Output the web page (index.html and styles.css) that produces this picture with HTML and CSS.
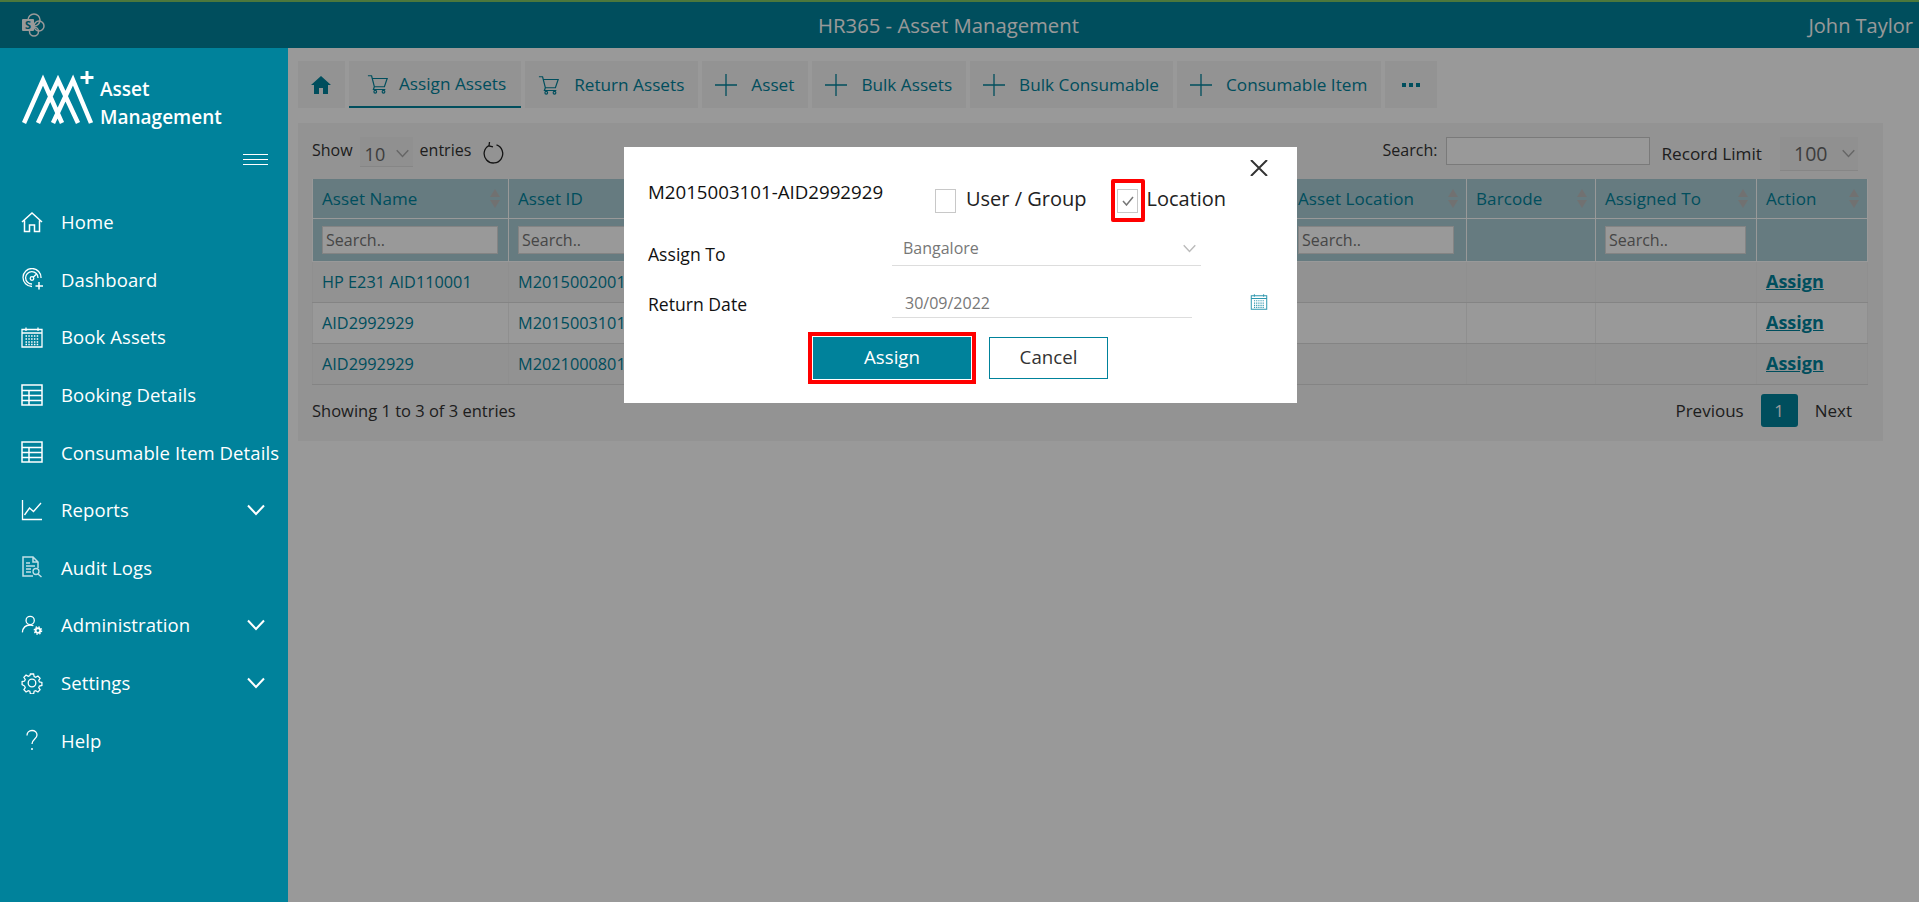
FILE: index.html
```html
<!DOCTYPE html>
<html lang="en">
<head>
    <meta charset="UTF-8">
    <title>HR365 - Asset Management</title>
    <link rel="stylesheet" href="styles.css">
</head>
<body>
    <svg class="sprite" aria-hidden="true">
        <symbol id="i-table" viewBox="0 0 22 22"><path d="M1 1h20v20H1zM1 6.500h20M1 11.500h20M1 16.500h20M8 6.500V21" fill="none" stroke="currentColor" stroke-width="1.500"/></symbol>
        <symbol id="i-calendar" viewBox="0 0 22 22"><path d="M1 3.500h20v17.500H1zM1 7h20M5 1.500v3.500M17 1.500v3.500" fill="none" stroke="currentColor" stroke-width="1.300"/><path d="M4.500 10h13M4.500 13h13M4.500 16h13M4.500 18.500h13" fill="none" stroke="currentColor" stroke-width="1.500" stroke-dasharray="1.500 1.300"/></symbol>
        <symbol id="i-chev" viewBox="0 0 18 12"><path d="M1 1.500l8 8.500 8-8.500" fill="none" stroke="currentColor" stroke-width="2"/></symbol>
        <symbol id="i-cart" viewBox="0 0 24 22"><path d="M1 2h4l3 12h11l3-9H6M8 14l-1 3h13" fill="none" stroke="currentColor" stroke-width="1.300"/><circle cx="9" cy="19.500" r="1.500" fill="none" stroke="currentColor" stroke-width="1.200"/><circle cx="18" cy="19.500" r="1.500" fill="none" stroke="currentColor" stroke-width="1.200"/></symbol>
        <symbol id="i-plus" viewBox="0 0 22 22"><path d="M11 0v22M0 11h22" fill="none" stroke="currentColor" stroke-width="1.300"/></symbol>
        <symbol id="i-sort" viewBox="0 0 10 19"><path d="M5 0l5 8H0zM5 19l5-8H0z" fill="#bdbdbd"/></symbol>
    </svg>

    <header class="topbar">
        <svg class="sp-logo" viewBox="0 0 24 24" width="24" height="24">
            <circle cx="13" cy="7" r="6" fill="none" stroke="#fff" stroke-width="1.500"/>
            <circle cx="18" cy="13" r="5" fill="none" stroke="#fff" stroke-width="1.500"/>
            <circle cx="13" cy="18.500" r="4.500" fill="none" stroke="#fff" stroke-width="1.500"/>
            <rect x="1" y="6" width="12" height="12" rx="1" fill="#fff"/>
            <text x="7" y="16" class="sp-letter">S</text>
        </svg>
        <div class="topbar-title">HR365 - Asset Management</div>
        <div class="topbar-user">John Taylor</div>
    </header>

    <div class="layout">
        <aside class="sidebar">
            <div class="logo">
                <svg class="logo-mark" viewBox="0 0 72 56" width="72" height="56">
                    <path d="M2 53L21 10L40 53M16 53L36 10L56 53M31 53L51 10L69 53" fill="none" stroke="#fff" stroke-width="4.500"/>
                    <path d="M65 1v13M58.500 7.500h13" fill="none" stroke="#fff" stroke-width="3"/>
                </svg>
                <div class="logo-text">Asset<br>Management</div>
            </div>
            <div class="burger"><span></span><span></span><span></span></div>
            <nav class="side-nav">
                <a class="side-item">
                    <svg class="side-icon" viewBox="0 0 22 22"><path d="M1 11L11 2l10 9M3.500 9.500V20.500h5v-6.500h5v6.500h5V9.500" fill="none" stroke="currentColor" stroke-width="1.500"/></svg>
                    <span>Home</span>
                </a>
                <a class="side-item">
                    <svg class="side-icon" viewBox="0 0 22 22"><path d="M11 18.500A9 9 0 1 1 20 10M11 16a6.200 6.200 0 1 1 6-6M12 9.500l3-3" fill="none" stroke="currentColor" stroke-width="1.300"/><circle cx="11" cy="10.500" r="1.800" fill="none" stroke="currentColor" stroke-width="1.300"/><path d="M18 14v7.500M14.500 18h7.500" fill="none" stroke="currentColor" stroke-width="1.500"/></svg>
                    <span>Dashboard</span>
                </a>
                <a class="side-item">
                    <svg class="side-icon"><use href="#i-calendar"/></svg>
                    <span>Book Assets</span>
                </a>
                <a class="side-item">
                    <svg class="side-icon"><use href="#i-table"/></svg>
                    <span>Booking Details</span>
                </a>
                <a class="side-item">
                    <svg class="side-icon"><use href="#i-table"/></svg>
                    <span>Consumable Item Details</span>
                </a>
                <a class="side-item">
                    <svg class="side-icon" viewBox="0 0 22 22"><path d="M1.500 1v19.500H21M3.500 16l5-7 4 3.500L20 4" fill="none" stroke="currentColor" stroke-width="1.300"/></svg>
                    <span>Reports</span>
                    <svg class="side-chev"><use href="#i-chev"/></svg>
                </a>
                <a class="side-item">
                    <svg class="side-icon audit" viewBox="0 0 22 22"><path d="M12 20H2V1h10l5 5v6M12 1v5h5M5 7h4M5 10h9M5 13h5M5 16h5" fill="none" stroke="currentColor" stroke-width="1.500"/><circle cx="15" cy="15.500" r="3" fill="none" stroke="currentColor" stroke-width="1.300"/><path d="M17 18l3.500 3" stroke="currentColor" stroke-width="1.500"/></svg>
                    <span>Audit Logs</span>
                </a>
                <a class="side-item">
                    <svg class="side-icon user" viewBox="0 0 24 22"><circle cx="10" cy="6" r="4.500" fill="none" stroke="currentColor" stroke-width="1.400"/><path d="M1.500 19c.5-5 3.500-8 8.500-8 1.500 0 2.500.3 3.500.8" fill="none" stroke="currentColor" stroke-width="1.400"/><circle cx="18.500" cy="17" r="2.500" fill="none" stroke="currentColor" stroke-width="2"/><circle cx="18.500" cy="17" r="4" fill="none" stroke="currentColor" stroke-width="1.500" stroke-dasharray="1.600 1.540"/></svg>
                    <span>Administration</span>
                    <svg class="side-chev"><use href="#i-chev"/></svg>
                </a>
                <a class="side-item">
                    <svg class="side-icon" viewBox="0 0 22 22"><circle cx="11" cy="11" r="3.800" fill="none" stroke="currentColor" stroke-width="1.300"/><path d="M9.200 1h3.600l.6 2.800 1.700.8 2.500-1.400 2.400 2.500-1.500 2.400.7 1.700 2.800.6v3.300l-2.800.7-.7 1.700 1.500 2.400-2.400 2.500-2.500-1.500-1.700.7-.6 2.800H9.200l-.6-2.800-1.700-.7-2.500 1.500-2.400-2.500 1.500-2.400-.7-1.700L0 12.700V9.400l2.800-.6.700-1.700L2 4.700l2.400-2.500 2.500 1.400 1.700-.8z" transform="translate(1.100 1.100) scale(.9)" fill="none" stroke="currentColor" stroke-width="1.400"/></svg>
                    <span>Settings</span>
                    <svg class="side-chev"><use href="#i-chev"/></svg>
                </a>
                <a class="side-item">
                    <svg class="side-icon" viewBox="0 0 22 22"><path d="M6 6.500C6 3.500 8 1.500 11 1.500s5 2 5 4.500c0 4-5 4-5 9" fill="none" stroke="currentColor" stroke-width="1.300"/><circle cx="11" cy="20" r="1" fill="currentColor"/></svg>
                    <span>Help</span>
                </a>
            </nav>
        </aside>

        <main class="main">
            <div class="tabs">
                <a class="tab tab-home"><svg viewBox="0 0 20 18" width="20" height="18"><path d="M10 0L0 9h3v9h5v-6h4v6h5V9h3z" fill="currentColor"/></svg></a>
                <a class="tab tab-active"><svg class="tab-icon"><use href="#i-cart"/></svg>Assign Assets</a>
                <a class="tab"><svg class="tab-icon"><use href="#i-cart"/></svg>Return Assets</a>
                <a class="tab"><svg class="tab-icon"><use href="#i-plus"/></svg>Asset</a>
                <a class="tab"><svg class="tab-icon"><use href="#i-plus"/></svg>Bulk Assets</a>
                <a class="tab"><svg class="tab-icon"><use href="#i-plus"/></svg>Bulk Consumable</a>
                <a class="tab"><svg class="tab-icon"><use href="#i-plus"/></svg>Consumable Item</a>
                <a class="tab tab-more"><span></span><span></span><span></span></a>
            </div>

            <section class="panel">
                <div class="table-tools">
                    <div class="tools-left">
                        <span>Show</span>
                        <div class="fake-select select-len">10<svg class="select-chev"><use href="#i-chev"/></svg></div>
                        <span>entries</span>
                        <svg class="refresh" viewBox="0 0 22 22" width="22" height="22"><path d="M7 3.500a9.300 9.300 0 1 0 7.500-.6M7.500 0L7 4l4 .8" fill="none" stroke="#222" stroke-width="1.300"/></svg>
                    </div>
                    <div class="tools-right">
                        <span>Search:</span>
                        <input class="table-search" type="text">
                        <span class="limit-label">Record Limit</span>
                        <div class="fake-select select-limit">100<svg class="select-chev"><use href="#i-chev"/></svg></div>
                    </div>
                </div>

                <table class="grid">
                    <colgroup>
                        <col class="col-name"><col class="col-id"><col class="col-loc"><col class="col-code"><col class="col-user"><col class="col-action">
                    </colgroup>
                    <thead>
                        <tr class="head-row">
                            <th>Asset Name<svg class="sort"><use href="#i-sort"/></svg></th>
                            <th>Asset ID<svg class="sort"><use href="#i-sort"/></svg></th>
                            <th>Asset Location<svg class="sort"><use href="#i-sort"/></svg></th>
                            <th>Barcode<svg class="sort"><use href="#i-sort"/></svg></th>
                            <th>Assigned To<svg class="sort"><use href="#i-sort"/></svg></th>
                            <th>Action<svg class="sort"><use href="#i-sort"/></svg></th>
                        </tr>
                        <tr class="filter-row">
                            <th><input type="text" placeholder="Search.."></th>
                            <th><input type="text" placeholder="Search.."></th>
                            <th class="filter-loc"><input type="text" placeholder="Search.."></th>
                            <th></th>
                            <th><input type="text" placeholder="Search.."></th>
                            <th></th>
                        </tr>
                    </thead>
                    <tbody>
                        <tr><td>HP E231 AID110001</td><td>M2015002001</td><td></td><td></td><td></td><td><a class="assign-link">Assign</a></td></tr>
                        <tr><td>AID2992929</td><td>M2015003101</td><td></td><td></td><td></td><td><a class="assign-link">Assign</a></td></tr>
                        <tr><td>AID2992929</td><td>M2021000801</td><td></td><td></td><td></td><td><a class="assign-link">Assign</a></td></tr>
                    </tbody>
                </table>

                <div class="table-foot">
                    <span>Showing 1 to 3 of 3 entries</span>
                    <div class="pager">
                        <span>Previous</span>
                        <span class="page-current">1</span>
                        <span>Next</span>
                    </div>
                </div>
            </section>
        </main>
    </div>

    <div class="overlay">
        <div class="modal">
            <button class="modal-close" type="button"><svg viewBox="0 0 18 16" width="18" height="16"><path d="M1 0l16 16M17 0L1 16" fill="none" stroke="#333" stroke-width="2"/></svg></button>
            <div class="modal-head">
                <div class="modal-title">M2015003101-AID2992929</div>
                <div class="modal-checks">
                    <label class="check-wrap"><span class="check"></span><span class="check-text">User / Group</span></label>
                    <label class="check-wrap check-marked">
                        <span class="mark"><span class="check"><svg viewBox="0 0 12 10" width="12" height="10"><path d="M1 5l3.500 4L11 1" fill="none" stroke="#777" stroke-width="1.500"/></svg></span></span><span class="check-text">Location</span>
                    </label>
                </div>
            </div>
            <div class="modal-form">
                <div class="form-label">Assign To</div>
                <div class="form-field field-select">Bangalore<svg class="field-chev"><use href="#i-chev"/></svg></div>
                <div class="form-label label-date">Return Date</div>
                <div class="date-row">
                    <div class="form-field field-date">30/09/2022</div>
                    <svg class="date-icon"><use href="#i-calendar"/></svg>
                </div>
            </div>
            <div class="modal-actions">
                <button class="btn btn-primary" type="button">Assign</button>
                <button class="btn btn-cancel" type="button">Cancel</button>
            </div>
        </div>
    </div>
</body>
</html>
```
FILE: styles.css
```css
* {
    box-sizing: border-box;
}
html, body {
    height: 100%;
}
body {
    margin: 0;
    font-family: "Open Sans", "Noto Sans", sans-serif;
    font-size: 16.300px;
    color: #333;
    background-color: #fff;
    overflow: hidden;
}
.sprite {
    display: none;
}
a {
    color: inherit;
}

/* top bar */
.topbar {
    height: 48px;
    display: flex;
    align-items: center;
    background-color: #00829b;
    border-top: 2px solid #7fc864;
    color: #fff;
    position: relative;
}
.sp-logo {
    margin-left: 21px;
}
.sp-letter {
    font-size: 11px;
    font-weight: 700;
    fill: #00829b;
    text-anchor: middle;
}
.topbar-title {
    position: absolute;
    left: 0;
    right: 22px;
    text-align: center;
    font-size: 20.300px;
}
.topbar-user {
    margin-left: auto;
    padding-right: 6px;
    font-size: 20px;
}

/* sidebar */
.layout {
    display: flex;
    height: 854px;
}
.sidebar {
    width: 288px;
    flex-shrink: 0;
    background-color: #00829b;
    color: #fff;
    position: relative;
    z-index: 3;
}
.logo {
    display: flex;
    padding: 22px 0 0 22px;
    height: 97px;
}
.logo-text {
    margin: 5px 0 0 6px;
    font-size: 19px;
    line-height: 28px;
    font-weight: 600;
}
.burger {
    width: 25px;
    margin: 9px 0 0 243px;
    display: flex;
    flex-direction: column;
    gap: 4px;
}
.burger span {
    height: 1px;
    background-color: #fff;
}
.side-nav {
    margin-top: 28px;
}
.side-item {
    height: 57.600px;
    padding-left: 21px;
    display: flex;
    align-items: center;
    font-size: 18.500px;
    letter-spacing: .1px;
}
.side-icon {
    width: 22px;
    height: 22px;
    margin-right: 18px;
    flex-shrink: 0;
}
.side-icon.audit {
    opacity: .75;
}
.side-chev {
    width: 18px;
    height: 12px;
    margin-left: auto;
    margin-right: 23px;
}

/* main area */
.main {
    flex: 1;
    padding: 13px 37px 0 10px;
}
.tabs {
    display: flex;
    gap: 4px;
    height: 47px;
}
.tab {
    display: flex;
    align-items: center;
    background-color: #f5f5f5;
    color: #00829b;
    padding: 0 14px 0 13px;
    font-size: 17.200px;
    white-space: nowrap;
}
.tab-home {
    width: 47px;
    justify-content: center;
}
.tab-active {
    border-bottom: 2px solid #00829b;
    padding: 0 15px 0 18px;
}
.tab-active .tab-icon {
    margin-right: 10px;
}
.tab-icon {
    width: 22px;
    height: 22px;
    margin-right: 14px;
}
.tab-more {
    width: 52px;
    justify-content: center;
    gap: 3px;
}
.tab-more span {
    width: 4px;
    height: 4px;
    background-color: #00829b;
}
.panel {
    margin-top: 15px;
    background-color: #f5f5f5;
    padding: 14px 15px 0 14px;
    height: 318px;
}
.table-tools {
    display: flex;
    justify-content: space-between;
    height: 42px;
}
.tools-left, .tools-right {
    display: flex;
    align-items: flex-start;
}
.tools-right {
    padding-right: 10px;
}
.tools-left span, .tools-right span {
    line-height: 26px;
    font-size: 16px;
}
.fake-select {
    display: flex;
    align-items: center;
    justify-content: space-between;
    border-bottom: 1px solid #e0e0e0;
    background-color: #f0f0f0;
    color: #666;
}
.select-len {
    width: 53px;
    height: 30px;
    margin: 0 7px;
    padding: 4px 4px 0 5px;
    font-size: 18px;
}
.select-limit {
    width: 78px;
    height: 34px;
    margin-left: 18px;
    padding: 0 3px 0 14px;
    font-size: 19.500px;
}
.select-chev {
    width: 13px;
    height: 9px;
    color: #aaa;
}
.refresh {
    margin: 5px 0 0 11px;
}
.table-search {
    width: 204px;
    height: 28px;
    margin-left: 9px;
    border: 1px solid #ccc;
    background-color: #fff;
}
.tools-right .limit-label {
    margin: 4px 0 0 11px;
    font-size: 17.200px;
}

/* table */
.grid {
    width: 1555px;
    table-layout: fixed;
    border-collapse: collapse;
}
.col-name { width: 196px; }
.col-id { width: 780px; }
.col-loc { width: 178px; }
.col-code { width: 129px; }
.col-user { width: 161px; }
.col-action { width: 111px; }
.grid th {
    background-color: #aacdd5;
    border: 1px solid #fff;
    border-top: 0;
    color: #00829b;
    font-weight: 400;
    text-align: left;
    padding: 0 10px 0 9px;
    position: relative;
}
.head-row th {
    height: 39px;
    font-size: 17px;
    letter-spacing: .1px;
}
.filter-row th {
    height: 43px;
}
.filter-row .filter-loc {
    padding-right: 12px;
}
.grid input {
    width: 100%;
    height: 28px;
    display: block;
    border: 1px solid #ddd;
    padding: 0 3px;
    font: inherit;
    font-size: 16px;
}
.sort {
    position: absolute;
    right: 8px;
    top: 10px;
    width: 10px;
    height: 19px;
}
.grid td {
    height: 41px;
    padding: 0 9px;
    border: 1px solid #eee;
    border-bottom: 1px solid #ddd;
    color: #00829b;
    background-color: #fff;
}
.grid tbody tr:nth-child(odd) td {
    background-color: #f3f3f3;
}
.assign-link {
    font-weight: 700;
    font-size: 18px;
    line-height: 20px;
    text-decoration: underline;
}
.table-foot {
    display: flex;
    justify-content: space-between;
    align-items: center;
    height: 52px;
    padding-right: 16px;
    font-size: 16.500px;
}
.pager {
    display: flex;
    align-items: center;
    gap: 17px;
    font-size: 17px;
}
.page-current {
    width: 37px;
    height: 33px;
    display: flex;
    align-items: center;
    justify-content: center;
    background-color: #00829b;
    color: #fff;
    border-radius: 3px;
}

/* assign dialog */
.overlay {
    position: fixed;
    inset: 0;
    z-index: 2;
    background-color: rgba(0, 0, 0, .4);
}
.modal {
    position: absolute;
    left: 624px;
    top: 147px;
    width: 673px;
    height: 256px;
    background-color: #fff;
    padding: 32px 25px 0 24px;
    color: #111;
}
.modal-close {
    position: absolute;
    right: 29px;
    top: 13px;
    padding: 0;
    border: 0;
    background: none;
    line-height: 0;
}
.modal-head {
    display: flex;
}
.modal-title {
    width: 287px;
    font-size: 18.700px;
    font-weight: 500;
    line-height: 26px;
}
.modal-checks {
    display: flex;
    gap: 24px;
    align-items: center;
    height: 43px;
}
.check-wrap {
    display: flex;
    align-items: center;
    gap: 10px;
    font-size: 20px;
    color: #222;
}
.check-text {
    padding-bottom: 4px;
}
.check-marked {
    gap: 2px;
}
.check {
    width: 21px;
    height: 24px;
    border: 1px solid #c8c8c8;
    display: flex;
    align-items: center;
    justify-content: center;
}
.mark {
    width: 34px;
    height: 43px;
    border: 4px solid #f00;
    border-radius: 2px;
    display: flex;
    align-items: center;
    justify-content: center;
}
.modal-form {
    display: grid;
    grid-template-columns: 244px 1fr;
    margin-top: 9px;
}
.form-label {
    font-size: 17.600px;
    font-weight: 500;
    line-height: 24px;
    padding-top: 11px;
}
.label-date {
    padding-top: 26px;
}
.form-field {
    color: #777;
    font-size: 16px;
    border-bottom: 1px solid #ddd;
    display: flex;
    align-items: center;
}
.field-select {
    width: 309px;
    height: 35px;
    padding: 0 5px 0 11px;
    justify-content: space-between;
}
.field-chev {
    width: 13px;
    height: 9px;
    color: #bbb;
}
.date-row {
    display: flex;
    height: 52px;
}
.field-date {
    width: 300px;
    padding: 22px 0 0 13px;
}
.date-icon {
    width: 18px;
    height: 17px;
    margin: 27px 0 0 58px;
    color: #2e97ae;
}
.modal-actions {
    display: flex;
    gap: 18px;
    margin: 19px 0 0 165px;
}
.btn {
    height: 42px;
    font-family: inherit;
    font-size: 18.700px;
    padding: 0 0 4px;
}
.btn-primary {
    width: 158px;
    background-color: #00829b;
    color: #fff;
    border: 0;
    outline: 4px solid #f00;
    outline-offset: 1px;
}
.btn-cancel {
    width: 119px;
    background-color: #fff;
    border: 1px solid #00829b;
    color: #333;
}
```
